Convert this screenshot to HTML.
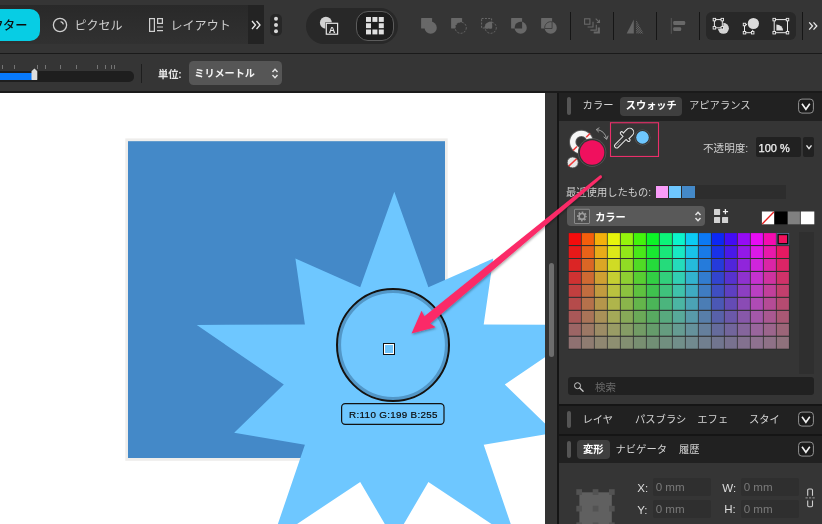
<!DOCTYPE html>
<html lang="ja">
<head>
<meta charset="utf-8">
<title>Affinity</title>
<style>
*{box-sizing:border-box;margin:0;padding:0}
html,body{width:822px;height:524px;overflow:hidden;background:#333}
body{position:relative;font-family:"Liberation Sans","Noto Sans CJK JP",sans-serif;font-size:11px;color:#d6d6d6}
#root{position:absolute;left:0;top:0;width:822px;height:524px;will-change:transform}
.abs{position:absolute}
.t{position:absolute;white-space:nowrap;line-height:16px;height:16px}
.b{font-weight:bold}
#tb1{left:0;top:0;width:822px;height:54px;background:#353535}
#tb1line{left:0;top:53.300px;width:822px;height:1.300px;background:#1a1a1a}
#tb2{left:0;top:54px;width:822px;height:39px;background:#353535}
#canvas{left:0;top:92.600px;width:545.200px;height:432px;background:#fff;overflow:hidden}
.tk{position:absolute;top:65.400px;width:1px;height:3.300px;background:#747474}
.sep{position:absolute;top:12px;width:1px;height:28px;background:#161616}
.hdr{position:absolute;left:559px;width:263px;background:#212121}
.grip{position:absolute;left:566.500px;width:4px;background:#555;border-radius:2px}
.sel{position:absolute;background:#3f3f3f;border-radius:4px}
.inp{position:absolute;background:#2f2f2f;border-radius:2px;color:#7a7a7a;font-size:11.600px;line-height:18px;padding-left:3px}
</style>
</head>
<body>
<div id="root">
<!-- ===== top toolbar ===== -->
<div id="tb1" class="abs"></div>
<div class="abs" style="left:0;top:5.300px;width:248px;height:38.600px;background:linear-gradient(#292929,#313131)"></div>
<div class="abs" style="left:248px;top:5.300px;width:16px;height:38.600px;background:#232323"></div>
<div class="abs" style="left:-30px;top:9.300px;width:69.600px;height:31.300px;background:#07cde4;border-radius:10px"></div>
<div class="t" style="left:-20.800px;top:18.400px;font-size:12.200px;font-weight:500;color:#0c0c0c">ベクター</div>
<svg class="abs" style="left:52px;top:17px" width="16" height="16" viewBox="0 0 16 16"><circle cx="8" cy="8" r="6.6" fill="none" stroke="#cfcfcf" stroke-width="1.3"/><path d="M8.6 4.6 A3.6 3.6 0 0 1 11.4 7.4" fill="none" stroke="#cfcfcf" stroke-width="1.3"/></svg>
<div class="t" style="left:74.600px;top:17.800px;font-size:12px;color:#cecece">ピクセル</div>
<svg class="abs" style="left:148px;top:17px" width="16" height="16" viewBox="0 0 16 16"><rect x="1.6" y="1.6" width="4.8" height="12.8" fill="none" stroke="#cfcfcf" stroke-width="1.2"/><rect x="9.6" y="1.6" width="4.8" height="4.8" fill="none" stroke="#cfcfcf" stroke-width="1.2"/><path d="M9 10h6M9 13.6h6" stroke="#cfcfcf" stroke-width="1.2"/></svg>
<div class="t" style="left:170.500px;top:17.800px;font-size:12.050px;color:#cecece">レイアウト</div>
<svg class="abs" style="left:251px;top:19px" width="10" height="12" viewBox="0 0 10 12"><path d="M1 2l3.5 4L1 10M5.5 2L9 6l-3.500 4" fill="none" stroke="#e8e8e8" stroke-width="1.3"/></svg>
<div class="abs" style="left:270px;top:13.500px;width:11.800px;height:22.500px;background:#272727;border-radius:5px"></div>
<svg class="abs" style="left:270px;top:14px" width="12" height="22" viewBox="0 0 12 22"><circle cx="6" cy="4.800" r="2" fill="#d8d8d8"/><circle cx="6" cy="11" r="2" fill="#d8d8d8"/><circle cx="6" cy="17.200" r="2" fill="#d8d8d8"/></svg>
<!-- pill group -->
<div class="abs" style="left:306px;top:7.500px;width:92px;height:36px;background:#282828;border-radius:18px"></div>
<svg class="abs" style="left:318px;top:15px" width="24" height="22" viewBox="0 0 24 22"><circle cx="7.900" cy="7.700" r="6" fill="#d2d2d2"/><rect x="7.300" y="7.300" width="13.300" height="12.900" fill="#282828"/><rect x="8.300" y="8.300" width="11.300" height="10.900" fill="#282828" stroke="#e6e6e6" stroke-width="1.200"/><text x="13.950" y="17.500" font-family="Liberation Sans, sans-serif" font-size="9.200" font-weight="bold" fill="#e6e6e6" text-anchor="middle">A</text></svg>
<div class="abs" style="left:355.800px;top:11.100px;width:38.600px;height:30px;background:#1d1d1d;border:1.300px solid #5c5c5c;border-radius:12px"></div>
<svg class="abs" style="left:365.900px;top:16.700px" width="18" height="18" viewBox="0 0 18 18"><g fill="#e0e0e0"><rect x="0" y="0" width="5" height="4.900"/><rect x="6.400" y="0" width="5" height="4.900"/><rect x="12.800" y="0" width="5" height="4.900"/><rect x="0" y="6.250" width="5" height="4.900"/><rect x="12.800" y="6.250" width="5" height="4.900"/><rect x="0" y="12.500" width="5" height="4.900"/><rect x="6.400" y="12.500" width="5" height="4.900"/><rect x="12.800" y="12.500" width="5" height="4.900"/></g></svg>
<!-- boolean ops (disabled) -->
<svg class="abs" style="left:420px;top:17px" width="18" height="18" viewBox="0 0 18 18"><rect x="1.100" y="1" width="11" height="10.500" rx="0.600" fill="#686868"/><circle cx="10.700" cy="10.700" r="6.100" fill="#686868"/></svg>
<svg class="abs" style="left:450px;top:17px" width="18" height="18" viewBox="0 0 18 18"><rect x="1.100" y="1" width="11" height="10.500" rx="0.600" fill="#686868"/><circle cx="10.700" cy="10.700" r="5.600" fill="#353535" stroke="#686868" stroke-width="1" stroke-dasharray="2 1.350"/></svg>
<svg class="abs" style="left:480px;top:17px" width="18" height="18" viewBox="0 0 18 18"><rect x="1.600" y="1.500" width="10" height="9.500" fill="none" stroke="#686868" stroke-width="1" stroke-dasharray="2 1.300"/><circle cx="10.700" cy="10.700" r="5.600" fill="none" stroke="#686868" stroke-width="1" stroke-dasharray="2 1.350"/><path d="M12.100 11.500H4.750A6 6 0 0 1 12.100 4.870z" fill="#686868"/></svg>
<svg class="abs" style="left:510px;top:17px" width="18" height="18" viewBox="0 0 18 18"><rect x="1.100" y="1" width="11" height="10.500" rx="0.600" fill="#686868"/><circle cx="10.700" cy="10.700" r="6.100" fill="#686868"/><path d="M12.100 11.500H4.750A6 6 0 0 1 12.100 4.870z" fill="#353535"/></svg>
<svg class="abs" style="left:540px;top:17px" width="18" height="18" viewBox="0 0 18 18"><rect x="1.100" y="1" width="11" height="10.500" rx="0.600" fill="#686868"/><circle cx="10.700" cy="10.700" r="6.100" fill="#686868"/><path d="M12.100 11.500H4.750A6 6 0 0 1 12.100 4.870z" fill="none" stroke="#3c3c3c" stroke-width="0.900"/></svg>
<div class="sep" style="left:570px"></div>
<svg class="abs" style="left:583px;top:17px" width="18" height="18" viewBox="0 0 18 18"><g fill="none" stroke="#686868" stroke-width="1.100"><rect x="1.600" y="1.800" width="5.300" height="5.400"/><path d="M10 4.800V10H4.600M13.300 7.700V13.100H7.400"/><path d="M12.700 1.700l3.800 3.800m0-2.700v2.700h-2.700"/><path d="M15.800 10.400V15.500H10.700" stroke-width="2.200"/></g></svg>
<div class="sep" style="left:613px"></div>
<svg class="abs" style="left:626px;top:18px" width="18" height="17" viewBox="0 0 18 17"><defs><pattern id="hz" width="1.600" height="1.600" patternUnits="userSpaceOnUse" patternTransform="rotate(-45)"><rect width="1.600" height="0.800" fill="#6a6a6a"/></pattern></defs><path d="M0.700 15.400L7.800 1.400V15.400z" fill="#666"/><path d="M10.100 1.400L17.500 15.400H10.100z" fill="url(#hz)"/></svg>
<div class="sep" style="left:656px"></div>
<svg class="abs" style="left:669px;top:18px" width="18" height="17" viewBox="0 0 18 17"><path d="M2.300 0v15.800" stroke="#555" stroke-width="1"/><rect x="4.200" y="3" width="12" height="4" rx="1.200" fill="#686868"/><rect x="4.200" y="9.200" width="8" height="3.700" rx="1.200" fill="#686868"/></svg>
<div class="sep" style="left:699px"></div>
<div class="abs" style="left:706px;top:12px;width:90px;height:28px;background:#282828;border-radius:6px"></div>
<svg class="abs" style="left:712px;top:16px" width="20" height="20" viewBox="0 0 20 20"><circle cx="11.400" cy="12.300" r="5.500" fill="#d4d4d4"/><rect x="1.400" y="2.600" width="9.900" height="10.200" fill="#282828"/><rect x="2.400" y="3.600" width="7.900" height="8.200" fill="none" stroke="#ececec" stroke-width="1"/><g fill="#282828" stroke="#ececec" stroke-width="0.900"><rect x="1.15" y="2.35" width="2.500" height="2.500"/><rect x="9.05" y="2.35" width="2.500" height="2.500"/><rect x="1.15" y="10.55" width="2.500" height="2.500"/><rect x="9.05" y="10.55" width="2.500" height="2.500"/></g></svg>
<svg class="abs" style="left:741px;top:16px" width="20" height="20" viewBox="0 0 20 20"><rect x="3.500" y="8.500" width="8.200" height="8.200" fill="none" stroke="#ececec" stroke-width="1"/><circle cx="12.400" cy="7.500" r="6.500" fill="#282828"/><circle cx="12.400" cy="7.500" r="5.600" fill="#dcdcdc"/><g fill="#282828" stroke="#ececec" stroke-width="0.900"><rect x="2.25" y="7.25" width="2.500" height="2.500"/><rect x="2.25" y="15.45" width="2.500" height="2.500"/><rect x="10.45" y="15.45" width="2.500" height="2.500"/></g></svg>
<svg class="abs" style="left:771px;top:16px" width="20" height="20" viewBox="0 0 20 20"><rect x="3.200" y="3.600" width="13.300" height="13.100" fill="none" stroke="#ececec" stroke-width="1"/><path d="M5.400 14.500V8.500A6.700 6 0 0 1 12.100 14.500z" fill="#dcdcdc"/><g fill="#282828" stroke="#ececec" stroke-width="0.900"><rect x="1.95" y="2.35" width="2.500" height="2.500"/><rect x="15.25" y="2.35" width="2.500" height="2.500"/><rect x="1.95" y="15.45" width="2.500" height="2.500"/><rect x="15.25" y="15.45" width="2.500" height="2.500"/></g></svg>
<div class="sep" style="left:802px"></div>
<svg class="abs" style="left:808px;top:20px" width="10" height="12" viewBox="0 0 10 12"><path d="M1.200 2.400l3.300 3.600L1.200 9.600M5.500 2.400L8.800 6l-3.300 3.600" fill="none" stroke="#e8e8e8" stroke-width="1.300"/></svg>
<div id="tb1line" class="abs"></div>

<!-- ===== context toolbar ===== -->
<div id="tb2" class="abs"></div>
<div class="abs" style="left:0;top:91.400px;width:822px;height:1.200px;background:#1a1a1a"></div>
<i class="tk" style="left:1.8px"></i><i class="tk" style="left:14.1px"></i><i class="tk" style="left:36.9px"></i><i class="tk" style="left:45.1px"></i><i class="tk" style="left:60.1px"></i><i class="tk" style="left:76.1px"></i><i class="tk" style="left:96.8px"></i><i class="tk" style="left:105.0px"></i><i class="tk" style="left:110.8px"></i><i class="tk" style="left:113.9px"></i>
<div class="abs" style="left:-10px;top:71px;width:144px;height:10.500px;background:#1e1e1e;border-radius:5px"></div>
<div class="abs" style="left:0;top:72.700px;width:33px;height:6.900px;background:#0879fb"></div>
<svg class="abs" style="left:31px;top:68px" width="7" height="13" viewBox="0 0 7 13"><path d="M3.400 0.600L6.300 3.200V11.600Q6.300 12 5.900 12H0.900Q0.500 12 0.500 11.600V3.200z" fill="#dedede"/></svg>
<div class="abs" style="left:140.900px;top:64.200px;width:1px;height:18.500px;background:#1e1e1e"></div>
<div class="t b" style="left:158px;top:66.500px;font-size:10.200px;color:#e6e6e6">単位:</div>
<div class="abs" style="left:189.200px;top:61.400px;width:93.100px;height:24.100px;background:#565656;border-radius:4.500px"></div>
<div class="t b" style="left:194.300px;top:65.800px;font-size:10.100px;color:#f2f2f2">ミリメートル</div>
<svg class="abs" style="left:270.500px;top:67px" width="8" height="13" viewBox="0 0 8 13"><path d="M1.500 5L4 2.200 6.500 5M1.500 8L4 10.800 6.500 8" fill="none" stroke="#e6e6e6" stroke-width="1.400"/></svg>

<!-- ===== canvas ===== -->
<div id="canvas" class="abs"></div>
<svg class="abs" style="left:0;top:0" width="822" height="524" viewBox="0 0 822 524">
<defs><clipPath id="cv"><rect x="0" y="92.600" width="545.200" height="432"/></clipPath></defs>
<g clip-path="url(#cv)">
<rect x="125.300" y="138.400" width="322.400" height="322.400" fill="#eeedeb"/>
<rect x="128" y="141.200" width="317" height="316.800" fill="#4489c8"/>
<polygon points="394.3,191.8 428.4,287.3 493.2,258.6 483.7,324.5 591.8,325.0 504.8,384.6 554.4,432.7 483.7,444.7 516.4,540.6 428.4,481.9 394.3,540.3 360.2,481.9 272.2,540.6 304.9,444.7 234.2,432.7 283.8,384.6 196.8,325.0 304.9,324.5 295.4,258.6 360.2,287.3" fill="#6ec7ff"/>
</g>
</svg>

<!-- ===== right side ===== -->
<div class="abs" style="left:545.200px;top:92.600px;width:12.300px;height:432px;background:#333"></div>
<div class="abs" style="left:557.200px;top:92.600px;width:1.900px;height:432px;background:#151515"></div>
<div class="abs" style="left:548.800px;top:262.800px;width:5.300px;height:94.700px;background:#6d6d6d;border-radius:3px"></div>
<div class="abs" style="left:559px;top:92.600px;width:263px;height:432px;background:#353535"></div>

<!-- header 1 -->
<div class="hdr" style="top:92.600px;height:28.100px"></div>
<div class="grip" style="top:97.200px;height:18.300px"></div>
<div class="t" style="left:582.600px;top:98.200px;font-size:10.300px;color:#d4d4d4">カラー</div>
<div class="sel" style="left:620.300px;top:97px;width:62px;height:18.700px"></div>
<div class="t b" style="left:625.800px;top:97.500px;font-size:10.200px;color:#fff">スウォッチ</div>
<div class="t" style="left:689px;top:97.500px;font-size:10.300px;color:#d4d4d4">アピアランス</div>
<svg class="abs" style="left:797px;top:98px" width="18" height="16" viewBox="0 0 18 16"><rect x="1.600" y="1.100" width="14.800" height="14" rx="3.300" fill="#1b1b1b" stroke="#939393" stroke-width="1"/><path d="M5 5.700l3.900 5.600 3.900-5.600" fill="none" stroke="#f2f2f2" stroke-width="1.600"/></svg>

<!-- colour selector -->
<svg class="abs" style="left:562px;top:120px" width="102" height="52" viewBox="562 120 102 52">
<circle cx="581.400" cy="142.100" r="8.700" fill="none" stroke="#5a5a5a" stroke-width="7.400"/>
<circle cx="581.400" cy="142.100" r="8.700" fill="none" stroke="#f6f6f6" stroke-width="5.400"/>
<path d="M590 133.500l-3.800 3.800M577 146.500l-3.900 3.900" stroke="#f03a3a" stroke-width="1.500"/>
<circle cx="592.100" cy="152.500" r="14.200" fill="#595959"/>
<circle cx="592.100" cy="152.500" r="13.500" fill="#333"/>
<circle cx="592.100" cy="152.500" r="12.200" fill="#f0105e"/>
<circle cx="572.700" cy="162.400" r="5.500" fill="#e6e6e6" stroke="#4a4a4a" stroke-width="0.800"/>
<path d="M576.700 158.700l-8 7.400" stroke="#f03a3a" stroke-width="1.500"/>
<g fill="none" stroke="#9a9a9a" stroke-width="1"><path d="M596.300 129.600q8.500 0.500 10.400 9.600"/><path d="M599.400 127.700l-3.200 1.900 2.600 2.600M603.700 136.800l3 2.600 1.400-3.700"/></g>
<rect x="610.500" y="122.750" width="48" height="33.700" fill="none" stroke="#ea2f6a" stroke-width="1.100"/>
<g fill="none" stroke-linecap="round">
<g stroke="#ececec"><path d="M616.700 145.800l8.800-8.800" stroke-width="5.300"/><path d="M621.700 133.100l7 7" stroke-width="3.800"/><path d="M627.200 134.800l2.500-2.500" stroke-width="9"/></g>
<g stroke="#353535"><path d="M616.700 145.800l8.800-8.800" stroke-width="3.300"/><path d="M621.700 133.100l7 7" stroke-width="1.800"/><path d="M627.200 134.800l2.500-2.500" stroke-width="7"/></g>
<path d="M616.900 145.400l3.300-3.300" stroke="#ececec" stroke-width="0.900" stroke-dasharray="0.550 0.650" stroke-linecap="butt"/>
</g>
<circle cx="642.500" cy="137.400" r="8" fill="#565656"/>
<circle cx="642.500" cy="137.400" r="7.300" fill="#303030"/>
<circle cx="642.500" cy="137.400" r="6.300" fill="#6ec7ff"/>
</svg>
<div class="t" style="left:703px;top:139.500px;font-size:10.600px;color:#cfcfcf">不透明度:</div>
<div class="abs" style="left:756.100px;top:136.900px;width:44.600px;height:20.600px;background:#212121;border-radius:2px"></div>
<div class="t" style="left:758.600px;top:139.600px;font-size:11px;-webkit-text-stroke:0.250px #f4f4f4;color:#f4f4f4">100 %</div>
<div class="abs" style="left:803.100px;top:136.900px;width:10.600px;height:20.600px;background:#212121;border-radius:2px"></div>
<svg class="abs" style="left:804.500px;top:144px" width="8" height="7" viewBox="0 0 8 7"><path d="M1.500 1.400L4 4.700l2.500-3.300" fill="none" stroke="#e8e8e8" stroke-width="1.400"/></svg>

<!-- recent -->
<div class="t" style="left:566px;top:185px;font-size:10.300px;color:#cfcfcf">最近使用したもの:</div>
<div class="abs" style="left:655.600px;top:185.300px;width:130.400px;height:13.600px;background:#2d2d2d"></div>
<div class="abs" style="left:656px;top:185.800px;width:11.800px;height:12.100px;background:#f99cf8"></div>
<div class="abs" style="left:669.200px;top:185.800px;width:11.700px;height:12.100px;background:#6ec7ff"></div>
<div class="abs" style="left:682.200px;top:185.800px;width:12.700px;height:12.100px;background:#4489c8"></div>

<!-- palette dropdown -->
<div class="abs" style="left:566.900px;top:206.400px;width:138px;height:20px;background:#595959;border-radius:4px"></div>
<svg class="abs" style="left:573px;top:208px" width="18" height="17" viewBox="0 0 18 17"><rect x="1.500" y="1.300" width="15" height="14.200" rx="0.500" fill="#4e4e4e" stroke="#8a8a8a" stroke-width="1"/><circle cx="9" cy="8.400" r="3.700" fill="none" stroke="#9c9c9c" stroke-width="2.600" stroke-dasharray="1.500 1.406" stroke-dashoffset="0.750"/><circle cx="9" cy="8.400" r="2.900" fill="none" stroke="#9c9c9c" stroke-width="1.600"/></svg>
<div class="t b" style="left:595.200px;top:210px;font-size:10.200px;color:#fff">カラー</div>
<svg class="abs" style="left:693.700px;top:210.400px" width="8" height="13" viewBox="0 0 8 13"><path d="M1.500 5L4 2.200 6.500 5M1.500 8L4 10.800 6.500 8" fill="none" stroke="#e6e6e6" stroke-width="1.400"/></svg>
<svg class="abs" style="left:713px;top:208px" width="17" height="16" viewBox="0 0 17 16"><g fill="#d2d2d2"><rect x="1" y="1" width="6.100" height="6.100" rx="0.600"/><rect x="1" y="9" width="6.100" height="6.100" rx="0.600"/><rect x="9" y="9" width="6.100" height="6.100" rx="0.600"/></g><path d="M9.900 3.700h5.200M12.400 1.100v5.200" stroke="#f0f0f0" stroke-width="1.300"/></svg>
<svg class="abs" style="left:761px;top:211.200px" width="54" height="14" viewBox="0 0 54 14"><rect x="0.900" y="0.500" width="12.200" height="12.800" fill="#fff"/><path d="M1.200 13L12.800 1" stroke="#e62020" stroke-width="1.300"/><rect x="13.700" y="0.500" width="12.400" height="12.800" fill="#000"/><rect x="27" y="0.500" width="11.900" height="12.800" fill="#808080"/><rect x="39.800" y="0.500" width="13.500" height="12.800" fill="#fff"/></svg>

<!-- swatch grid -->
<div class="abs" style="left:568px;top:232.500px;width:221.500px;height:117px;background:#2e2e2e"></div>
<div class="abs" style="left:799px;top:231.500px;width:15px;height:142px;background:#2f2f2f"></div>
<svg class="abs" style="left:0;top:0" width="822" height="524" viewBox="0 0 822 524">
<rect x="568.7" y="233.1" width="12.200" height="11.900" fill="#f40c0c"/>
<rect x="581.7" y="233.1" width="12.200" height="11.900" fill="#f45e0c"/>
<rect x="594.7" y="233.1" width="12.200" height="11.900" fill="#f4b00c"/>
<rect x="607.7" y="233.1" width="12.200" height="11.900" fill="#e7f40c"/>
<rect x="620.7" y="233.1" width="12.200" height="11.900" fill="#95f40c"/>
<rect x="633.7" y="233.1" width="12.200" height="11.900" fill="#43f40c"/>
<rect x="646.7" y="233.1" width="12.200" height="11.900" fill="#0cf427"/>
<rect x="659.7" y="233.1" width="12.200" height="11.900" fill="#0cf479"/>
<rect x="672.7" y="233.1" width="12.200" height="11.900" fill="#0cf4cb"/>
<rect x="685.7" y="233.1" width="12.200" height="11.900" fill="#0ccbf4"/>
<rect x="698.7" y="233.1" width="12.200" height="11.900" fill="#0c79f4"/>
<rect x="711.7" y="233.1" width="12.200" height="11.900" fill="#0c27f4"/>
<rect x="724.7" y="233.1" width="12.200" height="11.900" fill="#430cf4"/>
<rect x="737.7" y="233.1" width="12.200" height="11.900" fill="#950cf4"/>
<rect x="750.7" y="233.1" width="12.200" height="11.900" fill="#e70cf4"/>
<rect x="763.7" y="233.1" width="12.200" height="11.900" fill="#f40cb0"/>
<rect x="776.7" y="233.1" width="12.200" height="11.900" fill="#f40c5e"/>
<rect x="568.7" y="246.1" width="12.200" height="11.900" fill="#e81919"/>
<rect x="581.7" y="246.1" width="12.200" height="11.900" fill="#e86219"/>
<rect x="594.7" y="246.1" width="12.200" height="11.900" fill="#e8ab19"/>
<rect x="607.7" y="246.1" width="12.200" height="11.900" fill="#dce819"/>
<rect x="620.7" y="246.1" width="12.200" height="11.900" fill="#93e819"/>
<rect x="633.7" y="246.1" width="12.200" height="11.900" fill="#49e819"/>
<rect x="646.7" y="246.1" width="12.200" height="11.900" fill="#19e831"/>
<rect x="659.7" y="246.1" width="12.200" height="11.900" fill="#19e87a"/>
<rect x="672.7" y="246.1" width="12.200" height="11.900" fill="#19e8c3"/>
<rect x="685.7" y="246.1" width="12.200" height="11.900" fill="#19c3e8"/>
<rect x="698.7" y="246.1" width="12.200" height="11.900" fill="#197ae8"/>
<rect x="711.7" y="246.1" width="12.200" height="11.900" fill="#1931e8"/>
<rect x="724.7" y="246.1" width="12.200" height="11.900" fill="#4919e8"/>
<rect x="737.7" y="246.1" width="12.200" height="11.900" fill="#9319e8"/>
<rect x="750.7" y="246.1" width="12.200" height="11.900" fill="#dc19e8"/>
<rect x="763.7" y="246.1" width="12.200" height="11.900" fill="#e819ab"/>
<rect x="776.7" y="246.1" width="12.200" height="11.900" fill="#e81962"/>
<rect x="568.7" y="259.0" width="12.200" height="11.900" fill="#db2525"/>
<rect x="581.7" y="259.0" width="12.200" height="11.900" fill="#db6625"/>
<rect x="594.7" y="259.0" width="12.200" height="11.900" fill="#dba625"/>
<rect x="607.7" y="259.0" width="12.200" height="11.900" fill="#d0db25"/>
<rect x="620.7" y="259.0" width="12.200" height="11.900" fill="#90db25"/>
<rect x="633.7" y="259.0" width="12.200" height="11.900" fill="#50db25"/>
<rect x="646.7" y="259.0" width="12.200" height="11.900" fill="#25db3b"/>
<rect x="659.7" y="259.0" width="12.200" height="11.900" fill="#25db7b"/>
<rect x="672.7" y="259.0" width="12.200" height="11.900" fill="#25dbbb"/>
<rect x="685.7" y="259.0" width="12.200" height="11.900" fill="#25bbdb"/>
<rect x="698.7" y="259.0" width="12.200" height="11.900" fill="#257bdb"/>
<rect x="711.7" y="259.0" width="12.200" height="11.900" fill="#253bdb"/>
<rect x="724.7" y="259.0" width="12.200" height="11.900" fill="#5025db"/>
<rect x="737.7" y="259.0" width="12.200" height="11.900" fill="#9025db"/>
<rect x="750.7" y="259.0" width="12.200" height="11.900" fill="#d025db"/>
<rect x="763.7" y="259.0" width="12.200" height="11.900" fill="#db25a6"/>
<rect x="776.7" y="259.0" width="12.200" height="11.900" fill="#db2566"/>
<rect x="568.7" y="272.0" width="12.200" height="11.900" fill="#cf3232"/>
<rect x="581.7" y="272.0" width="12.200" height="11.900" fill="#cf6932"/>
<rect x="594.7" y="272.0" width="12.200" height="11.900" fill="#cfa032"/>
<rect x="607.7" y="272.0" width="12.200" height="11.900" fill="#c5cf32"/>
<rect x="620.7" y="272.0" width="12.200" height="11.900" fill="#8ecf32"/>
<rect x="633.7" y="272.0" width="12.200" height="11.900" fill="#57cf32"/>
<rect x="646.7" y="272.0" width="12.200" height="11.900" fill="#32cf44"/>
<rect x="659.7" y="272.0" width="12.200" height="11.900" fill="#32cf7c"/>
<rect x="672.7" y="272.0" width="12.200" height="11.900" fill="#32cfb3"/>
<rect x="685.7" y="272.0" width="12.200" height="11.900" fill="#32b3cf"/>
<rect x="698.7" y="272.0" width="12.200" height="11.900" fill="#327ccf"/>
<rect x="711.7" y="272.0" width="12.200" height="11.900" fill="#3244cf"/>
<rect x="724.7" y="272.0" width="12.200" height="11.900" fill="#5732cf"/>
<rect x="737.7" y="272.0" width="12.200" height="11.900" fill="#8e32cf"/>
<rect x="750.7" y="272.0" width="12.200" height="11.900" fill="#c532cf"/>
<rect x="763.7" y="272.0" width="12.200" height="11.900" fill="#cf32a0"/>
<rect x="776.7" y="272.0" width="12.200" height="11.900" fill="#cf3269"/>
<rect x="568.7" y="284.9" width="12.200" height="11.900" fill="#c23f3f"/>
<rect x="581.7" y="284.9" width="12.200" height="11.900" fill="#c26d3f"/>
<rect x="594.7" y="284.9" width="12.200" height="11.900" fill="#c29b3f"/>
<rect x="607.7" y="284.9" width="12.200" height="11.900" fill="#bac23f"/>
<rect x="620.7" y="284.9" width="12.200" height="11.900" fill="#8cc23f"/>
<rect x="633.7" y="284.9" width="12.200" height="11.900" fill="#5ec23f"/>
<rect x="646.7" y="284.9" width="12.200" height="11.900" fill="#3fc24e"/>
<rect x="659.7" y="284.9" width="12.200" height="11.900" fill="#3fc27c"/>
<rect x="672.7" y="284.9" width="12.200" height="11.900" fill="#3fc2ab"/>
<rect x="685.7" y="284.9" width="12.200" height="11.900" fill="#3fabc2"/>
<rect x="698.7" y="284.9" width="12.200" height="11.900" fill="#3f7cc2"/>
<rect x="711.7" y="284.9" width="12.200" height="11.900" fill="#3f4ec2"/>
<rect x="724.7" y="284.9" width="12.200" height="11.900" fill="#5e3fc2"/>
<rect x="737.7" y="284.9" width="12.200" height="11.900" fill="#8c3fc2"/>
<rect x="750.7" y="284.9" width="12.200" height="11.900" fill="#ba3fc2"/>
<rect x="763.7" y="284.9" width="12.200" height="11.900" fill="#c23f9b"/>
<rect x="776.7" y="284.9" width="12.200" height="11.900" fill="#c23f6d"/>
<rect x="568.7" y="297.9" width="12.200" height="11.900" fill="#b54b4b"/>
<rect x="581.7" y="297.9" width="12.200" height="11.900" fill="#b5714b"/>
<rect x="594.7" y="297.9" width="12.200" height="11.900" fill="#b5964b"/>
<rect x="607.7" y="297.9" width="12.200" height="11.900" fill="#afb54b"/>
<rect x="620.7" y="297.9" width="12.200" height="11.900" fill="#8ab54b"/>
<rect x="633.7" y="297.9" width="12.200" height="11.900" fill="#64b54b"/>
<rect x="646.7" y="297.9" width="12.200" height="11.900" fill="#4bb558"/>
<rect x="659.7" y="297.9" width="12.200" height="11.900" fill="#4bb57d"/>
<rect x="672.7" y="297.9" width="12.200" height="11.900" fill="#4bb5a3"/>
<rect x="685.7" y="297.9" width="12.200" height="11.900" fill="#4ba3b5"/>
<rect x="698.7" y="297.9" width="12.200" height="11.900" fill="#4b7db5"/>
<rect x="711.7" y="297.9" width="12.200" height="11.900" fill="#4b58b5"/>
<rect x="724.7" y="297.9" width="12.200" height="11.900" fill="#644bb5"/>
<rect x="737.7" y="297.9" width="12.200" height="11.900" fill="#8a4bb5"/>
<rect x="750.7" y="297.9" width="12.200" height="11.900" fill="#af4bb5"/>
<rect x="763.7" y="297.9" width="12.200" height="11.900" fill="#b54b96"/>
<rect x="776.7" y="297.9" width="12.200" height="11.900" fill="#b54b71"/>
<rect x="568.7" y="310.9" width="12.200" height="11.900" fill="#a95858"/>
<rect x="581.7" y="310.9" width="12.200" height="11.900" fill="#a97458"/>
<rect x="594.7" y="310.9" width="12.200" height="11.900" fill="#a99158"/>
<rect x="607.7" y="310.9" width="12.200" height="11.900" fill="#a4a958"/>
<rect x="620.7" y="310.9" width="12.200" height="11.900" fill="#87a958"/>
<rect x="633.7" y="310.9" width="12.200" height="11.900" fill="#6ba958"/>
<rect x="646.7" y="310.9" width="12.200" height="11.900" fill="#58a961"/>
<rect x="659.7" y="310.9" width="12.200" height="11.900" fill="#58a97e"/>
<rect x="672.7" y="310.9" width="12.200" height="11.900" fill="#58a99a"/>
<rect x="685.7" y="310.9" width="12.200" height="11.900" fill="#589aa9"/>
<rect x="698.7" y="310.9" width="12.200" height="11.900" fill="#587ea9"/>
<rect x="711.7" y="310.9" width="12.200" height="11.900" fill="#5861a9"/>
<rect x="724.7" y="310.9" width="12.200" height="11.900" fill="#6b58a9"/>
<rect x="737.7" y="310.9" width="12.200" height="11.900" fill="#8758a9"/>
<rect x="750.7" y="310.9" width="12.200" height="11.900" fill="#a458a9"/>
<rect x="763.7" y="310.9" width="12.200" height="11.900" fill="#a95891"/>
<rect x="776.7" y="310.9" width="12.200" height="11.900" fill="#a95874"/>
<rect x="568.7" y="323.8" width="12.200" height="11.900" fill="#9c6565"/>
<rect x="581.7" y="323.8" width="12.200" height="11.900" fill="#9c7865"/>
<rect x="594.7" y="323.8" width="12.200" height="11.900" fill="#9c8c65"/>
<rect x="607.7" y="323.8" width="12.200" height="11.900" fill="#999c65"/>
<rect x="620.7" y="323.8" width="12.200" height="11.900" fill="#859c65"/>
<rect x="633.7" y="323.8" width="12.200" height="11.900" fill="#729c65"/>
<rect x="646.7" y="323.8" width="12.200" height="11.900" fill="#659c6b"/>
<rect x="659.7" y="323.8" width="12.200" height="11.900" fill="#659c7f"/>
<rect x="672.7" y="323.8" width="12.200" height="11.900" fill="#659c92"/>
<rect x="685.7" y="323.8" width="12.200" height="11.900" fill="#65929c"/>
<rect x="698.7" y="323.8" width="12.200" height="11.900" fill="#657f9c"/>
<rect x="711.7" y="323.8" width="12.200" height="11.900" fill="#656b9c"/>
<rect x="724.7" y="323.8" width="12.200" height="11.900" fill="#72659c"/>
<rect x="737.7" y="323.8" width="12.200" height="11.900" fill="#85659c"/>
<rect x="750.7" y="323.8" width="12.200" height="11.900" fill="#99659c"/>
<rect x="763.7" y="323.8" width="12.200" height="11.900" fill="#9c658c"/>
<rect x="776.7" y="323.8" width="12.200" height="11.900" fill="#9c6578"/>
<rect x="568.7" y="336.8" width="12.200" height="11.900" fill="#8f7171"/>
<rect x="581.7" y="336.8" width="12.200" height="11.900" fill="#8f7c71"/>
<rect x="594.7" y="336.8" width="12.200" height="11.900" fill="#8f8771"/>
<rect x="607.7" y="336.8" width="12.200" height="11.900" fill="#8e8f71"/>
<rect x="620.7" y="336.8" width="12.200" height="11.900" fill="#838f71"/>
<rect x="633.7" y="336.8" width="12.200" height="11.900" fill="#788f71"/>
<rect x="646.7" y="336.8" width="12.200" height="11.900" fill="#718f75"/>
<rect x="659.7" y="336.8" width="12.200" height="11.900" fill="#718f7f"/>
<rect x="672.7" y="336.8" width="12.200" height="11.900" fill="#718f8a"/>
<rect x="685.7" y="336.8" width="12.200" height="11.900" fill="#718a8f"/>
<rect x="698.7" y="336.8" width="12.200" height="11.900" fill="#717f8f"/>
<rect x="711.7" y="336.8" width="12.200" height="11.900" fill="#71758f"/>
<rect x="724.7" y="336.8" width="12.200" height="11.900" fill="#78718f"/>
<rect x="737.7" y="336.8" width="12.200" height="11.900" fill="#83718f"/>
<rect x="750.7" y="336.8" width="12.200" height="11.900" fill="#8e718f"/>
<rect x="763.7" y="336.8" width="12.200" height="11.900" fill="#8f7187"/>
<rect x="776.7" y="336.8" width="12.200" height="11.900" fill="#8f717c"/>
<rect x="776.600" y="233" width="12.600" height="12.200" fill="#54779f"/>
<rect x="777.400" y="233.800" width="11" height="10.600" fill="#0c0c0c"/>
<rect x="778.800" y="235.200" width="8.200" height="7.800" fill="#f0105e"/>
</svg>

<!-- search -->
<div class="abs" style="left:568px;top:377.400px;width:245.600px;height:18.100px;background:#212121;border-radius:3px"></div>
<svg class="abs" style="left:572.800px;top:381px" width="12" height="12" viewBox="0 0 12 12"><circle cx="4.500" cy="4.700" r="3" fill="none" stroke="#cacaca" stroke-width="1"/><path d="M6.800 7l3.300 3.300" stroke="#cacaca" stroke-width="1.300" stroke-linecap="round"/></svg>
<div class="t" style="left:595px;top:379px;font-size:10.500px;color:#6a6a6a">検索</div>

<!-- header 2 -->
<div class="abs" style="left:559px;top:404.300px;width:263px;height:1.900px;background:#151515"></div>
<div class="hdr" style="top:406.200px;height:27.500px"></div>
<div class="abs" style="left:559px;top:433.700px;width:263px;height:2.200px;background:#151515"></div>
<div class="grip" style="top:411.300px;height:16.500px"></div>
<div class="t" style="left:582.500px;top:411.500px;font-size:10.300px;color:#d4d4d4">レイヤ</div>
<div class="t" style="left:635px;top:411.500px;font-size:10.300px;color:#d4d4d4">パスブラシ</div>
<div class="t" style="left:697.300px;top:411.500px;font-size:10.300px;color:#d4d4d4">エフェ</div>
<div class="t" style="left:749px;top:411.500px;font-size:10.300px;color:#d4d4d4">スタイ</div>
<svg class="abs" style="left:797px;top:411px" width="18" height="16" viewBox="0 0 18 16"><rect x="1.600" y="1.100" width="14.800" height="14" rx="3.300" fill="#1b1b1b" stroke="#939393" stroke-width="1"/><path d="M5 5.700l3.900 5.600 3.900-5.600" fill="none" stroke="#f2f2f2" stroke-width="1.600"/></svg>

<!-- header 3 -->
<div class="hdr" style="top:435.900px;height:27.400px"></div>
<div class="grip" style="top:441px;height:17.300px"></div>
<div class="sel" style="left:577.100px;top:440.400px;width:32.800px;height:18.500px"></div>
<div class="t b" style="left:583px;top:442.300px;font-size:10.300px;color:#fff">変形</div>
<div class="t" style="left:615.500px;top:442.300px;font-size:10.300px;color:#d4d4d4">ナビゲータ</div>
<div class="t" style="left:679px;top:442.300px;font-size:10.300px;color:#d4d4d4">履歴</div>
<svg class="abs" style="left:797px;top:440.500px" width="18" height="16" viewBox="0 0 18 16"><rect x="1.600" y="1.100" width="14.800" height="14" rx="3.300" fill="#1b1b1b" stroke="#939393" stroke-width="1"/><path d="M5 5.700l3.900 5.600 3.900-5.600" fill="none" stroke="#f2f2f2" stroke-width="1.600"/></svg>

<!-- transform -->
<svg class="abs" style="left:574px;top:487px" width="44" height="37" viewBox="574 487 44 37"><rect x="579.400" y="492.300" width="32.400" height="32" fill="#606060"/><g fill="#535353"><rect x="576.300" y="489.200" width="5.700" height="5.700"/><rect x="592.700" y="489.200" width="5.700" height="5.700"/><rect x="609" y="489.200" width="5.700" height="5.700"/><rect x="576.300" y="505.800" width="5.700" height="5.700"/><rect x="592.700" y="505.800" width="5.700" height="5.700"/><rect x="609" y="505.800" width="5.700" height="5.700"/><rect x="576.300" y="522.400" width="5.700" height="5.700"/><rect x="592.700" y="522.400" width="5.700" height="5.700"/><rect x="609" y="522.400" width="5.700" height="5.700"/></g></svg>
<div class="t" style="left:637.300px;top:480px;font-size:11.500px;color:#dcdcdc">X:</div>
<div class="inp" style="left:652.700px;top:478.200px;width:58.300px;height:17.600px">0 mm</div>
<div class="t" style="left:637.300px;top:502px;font-size:11.500px;color:#dcdcdc">Y:</div>
<div class="inp" style="left:652.700px;top:500px;width:58.300px;height:17.600px">0 mm</div>
<div class="t" style="left:722.300px;top:480px;font-size:11.500px;color:#dcdcdc">W:</div>
<div class="inp" style="left:740.700px;top:478.200px;width:58.300px;height:17.600px">0 mm</div>
<div class="t" style="left:724.300px;top:500.800px;font-size:11.500px;color:#dcdcdc">H:</div>
<div class="inp" style="left:740.700px;top:500px;width:58.300px;height:17.600px">0 mm</div>
<svg class="abs" style="left:804px;top:487px" width="12" height="22" viewBox="0 0 12 22"><g fill="none" stroke="#cfcfcf" stroke-width="1.100" stroke-linejoin="round"><path d="M3.700 8.700V3.200Q3.700 2 4.900 2H7.300Q8.500 2 8.500 3.200V8.700"/><path d="M3.700 13.400V18.500Q3.700 19.700 4.900 19.700H7.300Q8.500 19.700 8.500 18.500V13.400"/></g><path d="M1.500 10.900h9.200" stroke="#9a9a9a" stroke-width="1" stroke-dasharray="2.200 1.300"/></svg>

<!-- ===== overlay: picker loupe + arrow ===== -->
<svg class="abs" style="left:0;top:0" width="822" height="524" viewBox="0 0 822 524">
<circle cx="393" cy="345" r="55.500" fill="#70c7fe"/>
<circle cx="393" cy="345" r="53.500" fill="none" stroke="#5297c8" stroke-width="3.200"/>
<circle cx="393" cy="345" r="56" fill="none" stroke="#141210" stroke-width="2"/>
<rect x="383" y="343" width="12" height="12" fill="#111"/>
<rect x="384" y="344" width="10" height="10" fill="#fff"/>
<rect x="385" y="345" width="8" height="8" fill="#6ec3fa"/>
<rect x="341.600" y="403.600" width="102.400" height="20.800" rx="3.600" fill="#6ec7ff" stroke="#121212" stroke-width="1.200"/>
<text x="349.100" y="417.700" font-family="Liberation Sans, sans-serif" font-size="9.800" letter-spacing="0.330" fill="#0a0a0a" stroke="#0a0a0a" stroke-width="0.200">R:110 G:199 B:255</text>
<defs><filter id="sh" x="-10%" y="-10%" width="120%" height="120%"><feDropShadow dx="0.800" dy="1.200" stdDeviation="0.900" flood-color="#000" flood-opacity="0.350"/></filter></defs>
<g filter="url(#sh)" fill="#fb2c67"><path d="M600.100 175.300L424.400 316.300L421.500 310.700L411.500 333.500L435.600 327.300L430.200 323.500L601.900 177.500Q602.500 174.900 600.100 175.300z"/></g>
</svg>
</div>
</body>
</html>
